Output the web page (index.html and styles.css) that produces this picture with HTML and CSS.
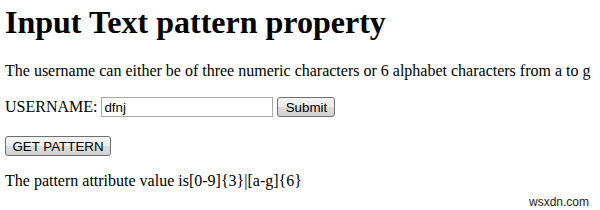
FILE: index.html
```html
<!DOCTYPE html>
<html lang="en">
<head>
  <meta charset="UTF-8" />
  <title>Input Text pattern property</title>
  <link rel="stylesheet" href="styles.css">
</head>
<body>
  <h1>Input Text pattern property</h1>
  <p class="info">The username can either be of three numeric characters or 6 alphabet characters from a to g</p>
  <form class="user-form">
    <label for="USERNAME">USERNAME:</label>
    <input type="text" id="USERNAME" name="user_name" value="dfnj" pattern="[0-9]{3}|[a-g]{6}" title="Three numeric character or 6 alphabet between a-g">
    <input type="submit" class="btn submit-btn" value="Submit">
  </form>
  <p class="get-row"><button class="btn get-btn" type="button">GET PATTERN</button></p>
  <p class="sample">The pattern attribute value is[0-9]{3}|[a-g]{6}</p>

  <div class="watermark">wsxdn.com</div>
</body>
</html>
```

FILE: styles.css
```css
body {
  margin: 0 0 0 5px;
  font-family: "Liberation Serif", "Times New Roman", serif;
  font-size: 16px;
  color: #000;
  background: #fff;
  overflow: hidden;
}

h1 {
  font-size: 32px;
  margin: 4px 0 21px 0;
}

p {
  margin: 0 0 16px 0;
}

.info {
  white-space: nowrap;
}

.user-form {
  margin: 0;
  display: flex;
  align-items: center;
  gap: 4px;
  height: 22px;
}

.user-form input[type="text"] {
  width: 172px;
  height: 20px;
  box-sizing: border-box;
  padding: 1px 2px;
  border: 1px solid #a9a9a9;
  font-family: "Liberation Sans", Arial, sans-serif;
  font-size: 13.33px;
  color: #000;
}

.btn {
  font-family: "Liberation Sans", Arial, sans-serif;
  font-size: 13.33px;
  color: #000;
  height: 20px;
  padding: 0 6px;
  border: 1px solid #707070;
  border-radius: 3px;
  background: linear-gradient(#f3f3f3, #ececec 50%, #dddddd 50%, #d2d2d2);
}

.submit-btn {
  width: 58px;
  padding: 0;
}

.get-btn {
  width: 106px;
  padding: 0;
}

.get-row {
  margin-top: 18px;
  height: 20px;
}

.sample {
  margin-top: 16px;
}

.watermark {
  position: absolute;
  right: 11px;
  bottom: 1px;
  font-family: "Liberation Sans", Arial, sans-serif;
  font-size: 12px;
  color: #222;
}
```
